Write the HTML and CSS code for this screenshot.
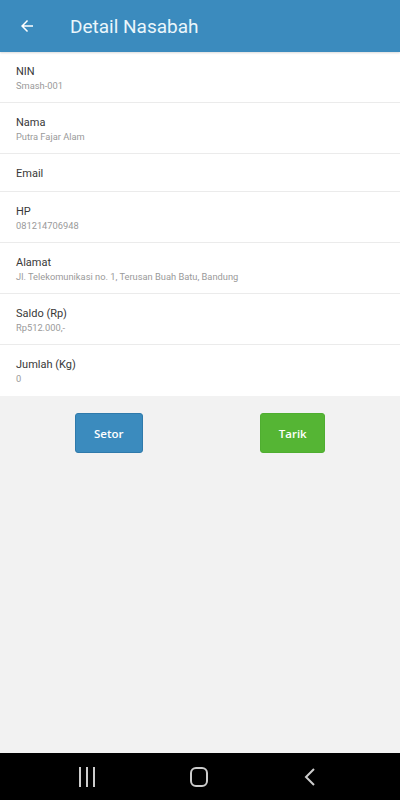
FILE: index.html
```html
<!DOCTYPE html>
<html lang="id">
<head>
<meta charset="utf-8">
<title>Detail Nasabah</title>
<link rel="stylesheet" href="styles.css">
</head>
<body>
<div class="screen">
  <header class="appbar">
    <svg class="back" width="18" height="18" viewBox="0 0 24 24"><path d="M20 11H7.83l5.59-5.59L12 4l-8 8 8 8 1.41-1.41L7.83 13H20v-2z" fill="#fff"/></svg>
    <h1 class="title">Detail Nasabah</h1>
  </header>
  <main class="content">
    <ul class="list">
      <li class="row"><div class="label">NIN</div><div class="value">Smash-001</div></li>
      <li class="row"><div class="label">Nama</div><div class="value">Putra Fajar Alam</div></li>
      <li class="row"><div class="label">Email</div></li>
      <li class="row"><div class="label">HP</div><div class="value">081214706948</div></li>
      <li class="row"><div class="label">Alamat</div><div class="value">Jl. Telekomunikasi no. 1, Terusan Buah Batu, Bandung</div></li>
      <li class="row"><div class="label">Saldo (Rp)</div><div class="value">Rp512.000,-</div></li>
      <li class="row last"><div class="label">Jumlah (Kg)</div><div class="value">0</div></li>
    </ul>
    <div class="actions">
      <button class="btn btn-setor">Setor</button>
      <button class="btn btn-tarik">Tarik</button>
    </div>
  </main>
  <nav class="navbar">
    <svg width="18" height="22" viewBox="0 0 18 22"><rect x="1" y="1" width="2" height="20" fill="#ccc"/><rect x="8" y="1" width="2" height="20" fill="#ccc"/><rect x="15" y="1" width="2" height="20" fill="#ccc"/></svg>
    <svg width="20" height="22" viewBox="0 0 20 22"><rect x="2" y="2" width="16" height="18" rx="5" fill="none" stroke="#ccc" stroke-width="2"/></svg>
    <svg width="16" height="22" viewBox="0 0 16 22"><path d="M12 3 L4 11 L12 19" fill="none" stroke="#ccc" stroke-width="2"/></svg>
  </nav>
</div>
</body>
</html>
```
FILE: styles.css
```css
* { box-sizing: border-box; }
html, body { margin: 0; padding: 0; }
body { font-family: Roboto, "Noto Sans", sans-serif; background: #f2f2f2; }
.screen { width: 400px; height: 800px; display: flex; flex-direction: column; }
.appbar {
  height: 52px; background: #3b8bbe; display: flex; align-items: center;
  padding-left: 18px; box-shadow: 0 1px 2px rgba(0,0,0,0.15); position: relative; z-index: 1;
}
.back { display: block; }
.title { margin: 0 0 0 34px; font-size: 19px; font-weight: 400; color: #eaf6fb; letter-spacing: 0; }
.content { flex: 1; background: #f2f2f2; }
.list { list-style: none; margin: 0; padding: 0; background: #fff; }
.row { padding: 13px 16px 10px; border-bottom: 1px solid #ebebeb; }
.row.last { border-bottom: none; padding-bottom: 11px; }
.label { font-size: 11px; line-height: 14px; color: #383838; }
.value { font-size: 9.3px; line-height: 13px; color: #9a9a9a; }
.actions { display: flex; justify-content: space-around; padding: 17px 16px 0; }
.btn {
  height: 40px; border-radius: 3px; color: #fff; font-family: "Open Sans", sans-serif;
  font-weight: 600; font-size: 11.5px; border: 1px solid transparent; padding: 0;
}
.btn-setor { width: 68px; background: #3b8bbe; border-color: #2f7aab; }
.btn-tarik { width: 65px; background: #55b534; border-color: #4fae30; }
.navbar {
  height: 47px; background: #000; display: flex; align-items: center;
  justify-content: space-between; padding: 0 82px 0 78px;
}
.navbar svg { display: block; }
```
